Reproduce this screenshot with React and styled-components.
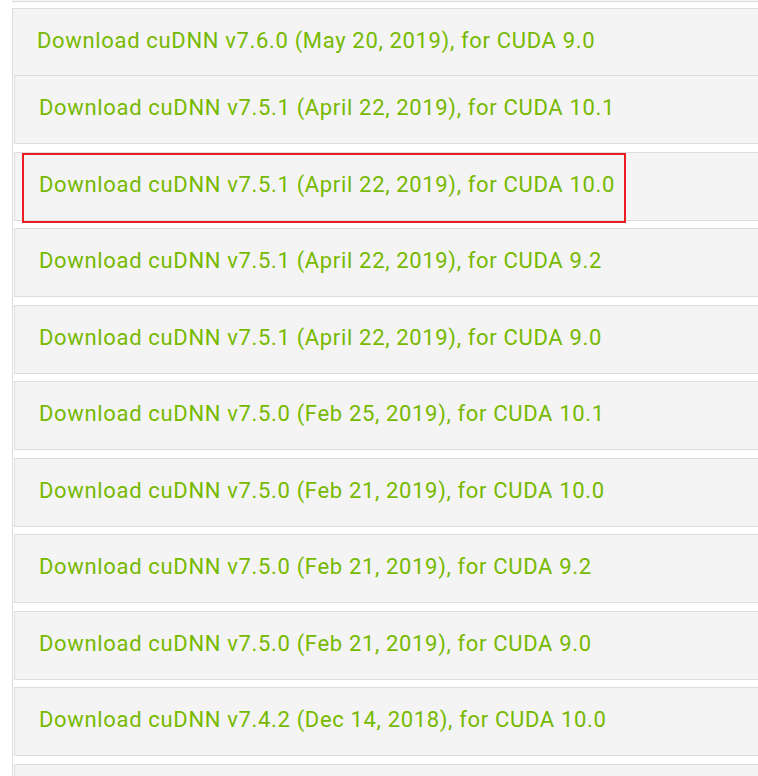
import React from "react";
import styled, { createGlobalStyle } from "styled-components";

const GlobalStyle = createGlobalStyle`
  html, body {
    margin: 0;
    padding: 0;
    background: #ffffff;
  }
  body {
    font-family: Roboto, "Liberation Sans", sans-serif;
  }
`;

const Page = styled.div`
  width: 758px;
  height: 776px;
  overflow: hidden;
  padding-left: 12px;
  box-sizing: border-box;
`;

const TopEdge = styled.div`
  height: 1px;
  background: #f4f4f4;
  border-bottom: 1px solid #dddddd;
`;

const Accordion = styled.div`
  margin-top: 6px;
  border-left: 1px solid #dddddd;
`;

const Header = styled.div`
  display: flex;
  align-items: center;
  height: 67px;
  padding: 0 0 3px 24px;
  box-sizing: border-box;
  background: #f4f4f4;
  border-top: 1px solid #dddddd;
`;

const List = styled.div`
  padding-left: 1px;
  display: flex;
  flex-direction: column;
  gap: 7.5px;
`;

const Panel = styled.div`
  position: relative;
  display: flex;
  align-items: center;
  height: 69px;
  padding: 0 0 4px 24px;
  box-sizing: border-box;
  background: #f4f4f4;
  border: 1px solid #dddddd;
  border-right: none;
`;

const Link = styled.a`
  color: #76b900;
  font-size: 22px;
  letter-spacing: 0.66px;
  text-decoration: none;
  white-space: nowrap;
  cursor: pointer;
`;

const Highlight = styled.div`
  position: absolute;
  left: 7px;
  top: 0;
  width: 604px;
  height: 70px;
  border: 2px solid #ec1c24;
  box-sizing: border-box;
  pointer-events: none;
`;

const releases = [
  "Download cuDNN v7.5.1 (April 22, 2019), for CUDA 10.1",
  "Download cuDNN v7.5.1 (April 22, 2019), for CUDA 10.0",
  "Download cuDNN v7.5.1 (April 22, 2019), for CUDA 9.2",
  "Download cuDNN v7.5.1 (April 22, 2019), for CUDA 9.0",
  "Download cuDNN v7.5.0 (Feb 25, 2019), for CUDA 10.1",
  "Download cuDNN v7.5.0 (Feb 21, 2019), for CUDA 10.0",
  "Download cuDNN v7.5.0 (Feb 21, 2019), for CUDA 9.2",
  "Download cuDNN v7.5.0 (Feb 21, 2019), for CUDA 9.0",
  "Download cuDNN v7.4.2 (Dec 14, 2018), for CUDA 10.0",
  "Download cuDNN v7.4.2 (Dec 14, 2018), for CUDA 9.2",
];

export default function App() {
  return (
    <>
      <GlobalStyle />
      <Page>
        <TopEdge />
        <Accordion>
          <Header>
            <Link>Download cuDNN v7.6.0 (May 20, 2019), for CUDA 9.0</Link>
          </Header>
          <List>
            {releases.map((label, i) => (
              <Panel key={i}>
                <Link>{label}</Link>
                {i === 1 && <Highlight />}
              </Panel>
            ))}
          </List>
        </Accordion>
      </Page>
    </>
  );
}
